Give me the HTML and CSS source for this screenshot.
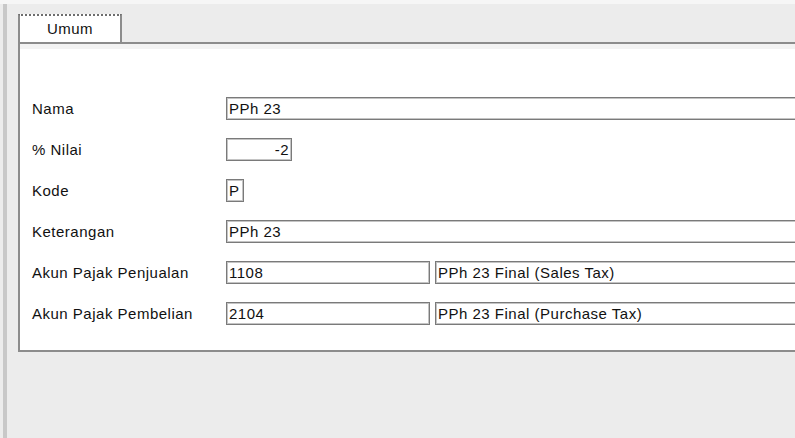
FILE: index.html
```html
<!DOCTYPE html>
<html>
<head lang="en">
    <meta charset="UTF-8">
    <title>Pajak</title>
    <link rel="stylesheet" href="styles.css">
</head>
<body>
<div class="window">
    <div class="edge"></div>
    <div class="content">
        <!--tab-->
        <div class="tabs">
            <div class="tab">Umum</div>
        </div>
        <!--form-->
        <div class="panel">
            <div class="form">
                <label class="lbl">Nama</label>
                <div class="field"><input class="box wide" type="text" value="PPh 23"></div>

                <label class="lbl">% Nilai</label>
                <div class="field"><input class="box num" type="text" value="-2"></div>

                <label class="lbl">Kode</label>
                <div class="field"><input class="box code" type="text" value="P"></div>

                <label class="lbl">Keterangan</label>
                <div class="field"><input class="box wide" type="text" value="PPh 23"></div>

                <label class="lbl">Akun Pajak Penjualan</label>
                <div class="field">
                    <input class="box acc" type="text" value="1108">
                    <input class="box wide" type="text" value="PPh 23 Final (Sales Tax)">
                </div>

                <label class="lbl">Akun Pajak Pembelian</label>
                <div class="field">
                    <input class="box acc" type="text" value="2104">
                    <input class="box wide" type="text" value="PPh 23 Final (Purchase Tax)">
                </div>
            </div>
        </div>
    </div>
</div>
</body>
</html>
```

FILE: styles.css
```css
/*halaman*/
body{
    margin: 0;
    background-color: #ececec;
    font-family: "Liberation Sans", Arial, sans-serif;
    font-size: 15px;
    letter-spacing: 0.5px;
    color: #111;
}
.window{
    display: flex;
    height: 434px;
    border-top: 4px solid #f6f6f6;
    overflow: hidden;
}
.edge{
    width: 4px;
    margin-left: 3px;
    background-color: #c8c8c8;
    flex-shrink: 0;
}
.content{
    flex: 1;
    padding: 10px 0 0 11px;
    overflow: hidden;
}
/*tab*/
.tabs{
    display: flex;
    height: 28px;
}
.tab{
    width: 100px;
    background-color: #fff;
    border-top: 2px dotted #6e6e6e;
    border-left: 2px solid #8c8c8c;
    border-right: 2px solid #8c8c8c;
    text-align: center;
    line-height: 26px;
}
/*panel*/
.panel{
    width: 900px;
    height: 306px;
    border-top: 2px solid #8c8c8c;
    border-left: 2px solid #8c8c8c;
    border-bottom: 2px solid #8c8c8c;
    background: linear-gradient(#f3f3f3 0, #f3f3f3 5px, #fff 5px);
}
.form{
    display: grid;
    grid-template-columns: 194px 1fr;
    grid-auto-rows: 23px;
    row-gap: 18px;
    padding: 53px 0 0 12px;
}
.lbl{
    line-height: 23px;
}
.field{
    display: flex;
    gap: 5px;
}
.box{
    height: 23px;
    box-sizing: border-box;
    border: 1px solid #7a7a7a;
    box-shadow: inset 0 0 0 1px #c4c4c4;
    padding: 0 2px;
    font-family: inherit;
    font-size: 15px;
    letter-spacing: 0.5px;
    color: #111;
    background-color: #fff;
    outline: none;
}
.wide{
    flex: 1;
}
.num{
    width: 66px;
    text-align: right;
}
.code{
    width: 18px;
}
.acc{
    width: 204px;
}
```
